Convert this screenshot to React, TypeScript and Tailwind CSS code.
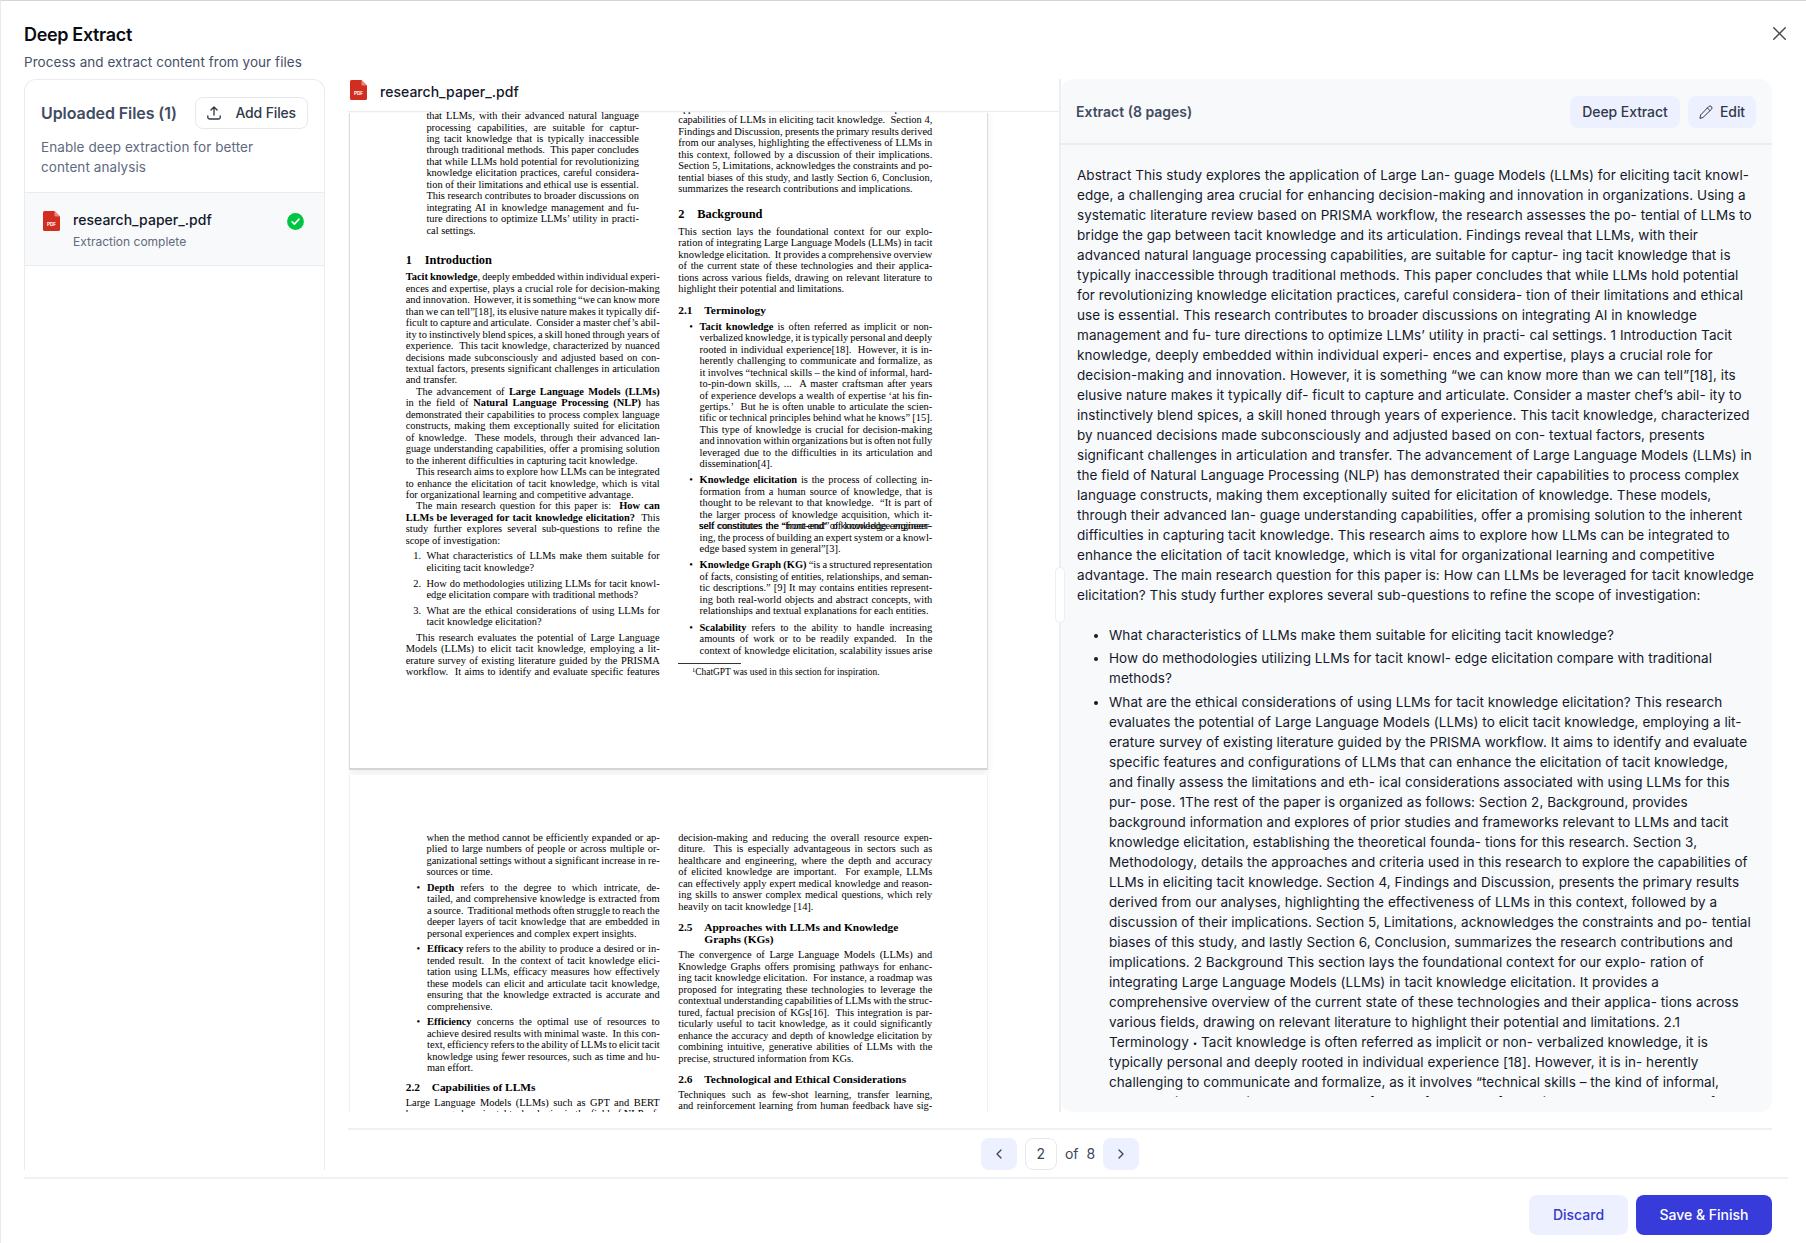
import React from "react";
import { ChevronLeft, ChevronRight, X } from "lucide-react";

function PdfIcon({ className }: { className?: string }) {
  return (
    <svg viewBox="0 0 17 20" className={className} width="17" height="20">
      <path d="M1.5 0H11.5L17 5.5V18.5A1.5 1.5 0 0 1 15.5 20H1.5A1.5 1.5 0 0 1 0 18.5V1.5A1.5 1.5 0 0 1 1.5 0Z" fill="#d22d21" />
      <path d="M11.5 0L17 5.5H12.5A1 1 0 0 1 11.5 4.5Z" fill="#e98a80" />
      <text x="8.5" y="15.2" fontSize="4.8" fontWeight="700" fontFamily="Inter, sans-serif" fill="#fff" textAnchor="middle">
        PDF
      </text>
    </svg>
  );
}

/* One typeset line. A trailing "|" marks the last line of a paragraph. */
function rich(s: string) {
  return s.split("**").map((part, i) => (i % 2 ? <b key={i}>{part}</b> : part));
}

function Lines({ text, className = "" }: { text: string[]; className?: string }) {
  return (
    <div className={className}>
      {text.map((raw, i) => {
        const end = raw.endsWith("|");
        const indent = raw.startsWith(">");
        const s = raw.replace(/^>|\|$/g, "").replace(/ {2}/g, "\u00a0 ");
        return (
          <div
            key={i}
            className={
              "h-[11.46px] whitespace-nowrap " +
              (indent ? "pl-[10.4px] " : "") +
              (end ? "" : "[text-align-last:justify] [word-spacing:-1.2px]")
            }
          >
            {rich(s)}
          </div>
        );
      })}
    </div>
  );
}

function Item({ mark, text, className = "" }: { mark: string; text: string[]; className?: string }) {
  return (
    <div className={"flex " + className}>
      <div className={"shrink-0 text-right " + (mark === "•" ? "w-[14.5px] mr-[6.8px]" : "w-[15.4px] mr-[5.4px]")}>{mark}</div>
      <Lines text={text} className="flex-1 min-w-0" />
    </div>
  );
}

function Heading({ no, children, big, className = "" }: { no: string; children: React.ReactNode; big?: boolean; className?: string }) {
  return (
    <div className={"flex font-bold whitespace-nowrap " + (big ? "text-[12.4px] " : "text-[11.4px] ") + className}>
      <div className={big ? "w-[19px] shrink-0" : "w-[26px] shrink-0"}>{no}</div>
      <div>{children}</div>
    </div>
  );
}

const extractIntro = [
  "Abstract This study explores the application of Large Lan- guage Models (LLMs) for eliciting tacit knowl-",
  "edge, a challenging area crucial for enhancing decision-making and innovation in organizations. Using a",
  "systematic literature review based on PRISMA workflow, the research assesses the po- tential of LLMs to",
  "bridge the gap between tacit knowledge and its articulation. Findings reveal that LLMs, with their",
  "advanced natural language processing capabilities, are suitable for captur- ing tacit knowledge that is",
  "typically inaccessible through traditional methods. This paper concludes that while LLMs hold potential",
  "for revolutionizing knowledge elicitation practices, careful considera- tion of their limitations and ethical",
  "use is essential. This research contributes to broader discussions on integrating AI in knowledge",
  "management and fu- ture directions to optimize LLMs’ utility in practi- cal settings. 1 Introduction Tacit",
  "knowledge, deeply embedded within individual experi- ences and expertise, plays a crucial role for",
  "decision-making and innovation. However, it is something “we can know more than we can tell”[18], its",
  "elusive nature makes it typically dif- ficult to capture and articulate. Consider a master chef’s abil- ity to",
  "instinctively blend spices, a skill honed through years of experience. This tacit knowledge, characterized",
  "by nuanced decisions made subconsciously and adjusted based on con- textual factors, presents",
  "significant challenges in articulation and transfer. The advancement of Large Language Models (LLMs) in",
  "the field of Natural Language Processing (NLP) has demonstrated their capabilities to process complex",
  "language constructs, making them exceptionally suited for elicitation of knowledge. These models,",
  "through their advanced lan- guage understanding capabilities, offer a promising solution to the inherent",
  "difficulties in capturing tacit knowledge. This research aims to explore how LLMs can be integrated to",
  "enhance the elicitation of tacit knowledge, which is vital for organizational learning and competitive",
  "advantage. The main research question for this paper is: How can LLMs be leveraged for tacit knowledge",
  "elicitation? This study further explores several sub-questions to refine the scope of investigation:",
];

const extractItems = [
  ["What characteristics of LLMs make them suitable for eliciting tacit knowledge?"],
  ["How do methodologies utilizing LLMs for tacit knowl- edge elicitation compare with traditional", "methods?"],
  [
    "What are the ethical considerations of using LLMs for tacit knowledge elicitation? This research",
    "evaluates the potential of Large Language Models (LLMs) to elicit tacit knowledge, employing a lit-",
    "erature survey of existing literature guided by the PRISMA workflow. It aims to identify and evaluate",
    "specific features and configurations of LLMs that can enhance the elicitation of tacit knowledge,",
    "and finally assess the limitations and eth- ical considerations associated with using LLMs for this",
    "pur- pose. 1The rest of the paper is organized as follows: Section 2, Background, provides",
    "background information and explores of prior studies and frameworks relevant to LLMs and tacit",
    "knowledge elicitation, establishing the theoretical founda- tions for this research. Section 3,",
    "Methodology, details the approaches and criteria used in this research to explore the capabilities of",
    "LLMs in eliciting tacit knowledge. Section 4, Findings and Discussion, presents the primary results",
    "derived from our analyses, highlighting the effectiveness of LLMs in this context, followed by a",
    "discussion of their implications. Section 5, Limitations, acknowledges the constraints and po- tential",
    "biases of this study, and lastly Section 6, Conclusion, summarizes the research contributions and",
    "implications. 2 Background This section lays the foundational context for our explo- ration of",
    "integrating Large Language Models (LLMs) in tacit knowledge elicitation. It provides a",
    "comprehensive overview of the current state of these technologies and their applica- tions across",
    "various fields, drawing on relevant literature to highlight their potential and limitations. 2.1",
    "Terminology • Tacit knowledge is often referred as implicit or non- verbalized knowledge, it is",
    "typically personal and deeply rooted in individual experience [18]. However, it is in- herently",
    "challenging to communicate and formalize, as it involves “technical skills – the kind of informal,",
    "hard- to-pin-down skills, ... A master craftsman after years of experience develops a wealth of",
  ],
];

/* Inline bullets are set smaller than the surrounding text. */
function smallBullets(s: string) {
  return s.split("•").map((part, i) => (
    <React.Fragment key={i}>
      {i > 0 && <span className="align-[1px] text-[8px] tracking-normal">•</span>}
      {part}
    </React.Fragment>
  ));
}

function PageTwo() {
  return (
    <div className="flex h-[657px] w-[639px] shrink-0 border border-t-0 border-[#dcdcdc] border-b-2 border-b-[#d4d4d4] bg-white pl-[55.7px] shadow-[0_2px_8px_rgba(0,0,0,0.08)]">
      <div className="w-[254px] shrink-0">
        <Lines
          className="ml-[20.7px] w-[212.5px] -mt-[2.9px]"
          text={[
            "that LLMs, with their advanced natural language",
            "processing capabilities, are suitable for captur-",
            "ing tacit knowledge that is typically inaccessible",
            "through traditional methods.  This paper concludes",
            "that while LLMs hold potential for revolutionizing",
            "knowledge elicitation practices, careful considera-",
            "tion of their limitations and ethical use is essential.",
            "This research contributes to broader discussions on",
            "integrating AI in knowledge management and fu-",
            "ture directions to optimize LLMs’ utility in practi-",
            "cal settings.|",
          ]}
        />
        <Heading no="1" big className="mt-[18.5px] mb-[5.3px]">Introduction</Heading>
        <Lines
          text={[
            "**Tacit knowledge**, deeply embedded within individual experi-",
            "ences and expertise, plays a crucial role for decision-making",
            "and innovation.  However, it is something “we can know more",
            "than we can tell”[18], its elusive nature makes it typically dif-",
            "ficult to capture and articulate.  Consider a master chef’s abil-",
            "ity to instinctively blend spices, a skill honed through years of",
            "experience.  This tacit knowledge, characterized by nuanced",
            "decisions made subconsciously and adjusted based on con-",
            "textual factors, presents significant challenges in articulation",
            "and transfer.|",
            ">The advancement of **Large Language Models (LLMs)**",
            "in the field of **Natural Language Processing (NLP)** has",
            "demonstrated their capabilities to process complex language",
            "constructs, making them exceptionally suited for elicitation",
            "of knowledge.  These models, through their advanced lan-",
            "guage understanding capabilities, offer a promising solution",
            "to the inherent difficulties in capturing tacit knowledge.|",
            ">This research aims to explore how LLMs can be integrated",
            "to enhance the elicitation of tacit knowledge, which is vital",
            "for organizational learning and competitive advantage.|",
            ">The main research question for this paper is:  **How can**",
            "**LLMs be leveraged for tacit knowledge elicitation?**  This",
            "study further explores several sub-questions to refine the",
            "scope of investigation:|",
          ]}
        />
        <Item mark="1." className="mt-[4.2px]" text={["What characteristics of LLMs make them suitable for", "eliciting tacit knowledge?|"]} />
        <Item mark="2." className="mt-[4.2px]" text={["How do methodologies utilizing LLMs for tacit knowl-", "edge elicitation compare with traditional methods?|"]} />
        <Item mark="3." className="mt-[4.2px] mb-[4.2px]" text={["What are the ethical considerations of using LLMs for", "tacit knowledge elicitation?|"]} />
        <Lines
          text={[
            ">This research evaluates the potential of Large Language",
            "Models (LLMs) to elicit tacit knowledge, employing a lit-",
            "erature survey of existing literature guided by the PRISMA",
            "workflow.  It aims to identify and evaluate specific features",
          ]}
        />
      </div>
      <div className="ml-[18.6px] w-[254px] shrink-0">
        <Lines
          className="-mt-[10.2px]"
          text={[
            "approaches and criteria used in this research to explore the",
            "capabilities of LLMs in eliciting tacit knowledge.  Section 4,",
            "Findings and Discussion, presents the primary results derived",
            "from our analyses, highlighting the effectiveness of LLMs in",
            "this context, followed by a discussion of their implications.",
            "Section 5, Limitations, acknowledges the constraints and po-",
            "tential biases of this study, and lastly Section 6, Conclusion,",
            "summarizes the research contributions and implications.|",
          ]}
        />
        <Heading no="2" big className="mt-[14.5px] mb-[5.5px]">Background</Heading>
        <Lines
          text={[
            "This section lays the foundational context for our explo-",
            "ration of integrating Large Language Models (LLMs) in tacit",
            "knowledge elicitation.  It provides a comprehensive overview",
            "of the current state of these technologies and their applica-",
            "tions across various fields, drawing on relevant literature to",
            "highlight their potential and limitations.|",
          ]}
        />
        <Heading no="2.1" className="mt-[10px] mb-[4.8px]">Terminology</Heading>
        <Item
          mark="•"
          text={[
            "**Tacit knowledge** is often referred as implicit or non-",
            "verbalized knowledge, it is typically personal and deeply",
            "rooted in individual experience[18].  However, it is in-",
            "herently challenging to communicate and formalize, as",
            "it involves “technical skills – the kind of informal, hard-",
            "to-pin-down skills, ...  A master craftsman after years",
            "of experience develops a wealth of expertise ‘at his fin-",
            "gertips.’  But he is often unable to articulate the scien-",
            "tific or technical principles behind what he knows” [15].",
            "This type of knowledge is crucial for decision-making",
            "and innovation within organizations but is often not fully",
            "leveraged due to the difficulties in its articulation and",
            "dissemination[4].|",
          ]}
        />
        <div className="relative">
          <Item
            mark="•"
            className="mt-[4.5px]"
            text={[
              "**Knowledge elicitation** is the process of collecting in-",
              "formation from a human source of knowledge, that is",
              "thought to be relevant to that knowledge.  “It is part of",
              "the larger process of knowledge acquisition, which it-",
              "self constitutes the “front-end” of knowledge engineer-",
              "ing, the process of building an expert system or a knowl-",
              "edge based system in general”[3].|",
            ]}
          />
          <div className="absolute top-[45.8px] right-[2px] left-[20.5px] font-['Liberation_Sans'] text-[9.6px] whitespace-nowrap text-black [text-align-last:justify] [word-spacing:-1.5px]">
            self constitutes the “front-end” of knowledge engineer-
          </div>
        </div>
        <Item
          mark="•"
          className="mt-[5px]"
          text={[
            "**Knowledge Graph (KG)** “is a structured representation",
            "of facts, consisting of entities, relationships, and seman-",
            "tic descriptions.” [9] It may contains entities represent-",
            "ing both real-world objects and abstract concepts, with",
            "relationships and textual explanations for each entities.|",
          ]}
        />
        <Item
          mark="•"
          className="mt-[5.2px]"
          text={[
            "**Scalability** refers to the ability to handle increasing",
            "amounts of work or to be readily expanded.  In the",
            "context of knowledge elicitation, scalability issues arise",
          ]}
        />
        <div className="mt-[6.4px] h-px w-[63px] bg-[#333]" />
        <div className="mt-[3px] flex pl-[13.8px] text-[9.4px]">
          <span className="-mt-[3px] text-[6.5px]">1</span>
          <span>ChatGPT was used in this section for inspiration.</span>
        </div>
      </div>
    </div>
  );
}

function PageThree() {
  return (
    <div className="flex h-[500px] w-[639px] shrink-0 border border-t-0 border-[#f0f0f0] bg-white pt-[56.9px] pl-[55.7px] shadow-[0_0_8px_rgba(0,0,0,0.03)]">
      <div className="w-[254px] shrink-0">
        <Lines
          className="ml-[20.8px]"
          text={[
            "when the method cannot be efficiently expanded or ap-",
            "plied to large numbers of people or across multiple or-",
            "ganizational settings without a significant increase in re-",
            "sources or time.|",
          ]}
        />
        <Item
          mark="•"
          className="mt-[4.2px]"
          text={[
            "**Depth** refers to the degree to which intricate, de-",
            "tailed, and comprehensive knowledge is extracted from",
            "a source.  Traditional methods often struggle to reach the",
            "deeper layers of tacit knowledge that are embedded in",
            "personal experiences and complex expert insights.|",
          ]}
        />
        <Item
          mark="•"
          className="mt-[4.1px]"
          text={[
            "**Efficacy** refers to the ability to produce a desired or in-",
            "tended result.  In the context of tacit knowledge elici-",
            "tation using LLMs, efficacy measures how effectively",
            "these models can elicit and articulate tacit knowledge,",
            "ensuring that the knowledge extracted is accurate and",
            "comprehensive.|",
          ]}
        />
        <Item
          mark="•"
          className="mt-[4.3px]"
          text={[
            "**Efficiency** concerns the optimal use of resources to",
            "achieve desired results with minimal waste.  In this con-",
            "text, efficiency refers to the ability of LLMs to elicit tacit",
            "knowledge using fewer resources, such as time and hu-",
            "man effort.|",
          ]}
        />
        <Heading no="2.2" className="mt-[8.2px] mb-[3.7px]">Capabilities of LLMs</Heading>
        <Lines
          text={[
            "Large Language Models (LLMs) such as GPT and BERT",
            "have emerged as pivotal technologies in the field of NLP, of-",
          ]}
        />
      </div>
      <div className="ml-[18.6px] w-[254px] shrink-0">
        <Lines
          text={[
            "decision-making and reducing the overall resource expen-",
            "diture.  This is especially advantageous in sectors such as",
            "healthcare and engineering, where the depth and accuracy",
            "of elicited knowledge are important.  For example, LLMs",
            "can effectively apply expert medical knowledge and reason-",
            "ing skills to answer complex medical questions, which rely",
            "heavily on tacit knowledge [14].|",
          ]}
        />
        <Heading no="2.5" className="mt-[10.2px] mb-[4.3px]">
          <div>Approaches with LLMs and Knowledge</div>
          <div>Graphs (KGs)</div>
        </Heading>
        <Lines
          text={[
            "The convergence of Large Language Models (LLMs) and",
            "Knowledge Graphs offers promising pathways for enhanc-",
            "ing tacit knowledge elicitation.  For instance, a roadmap was",
            "proposed for integrating these technologies to leverage the",
            "contextual understanding capabilities of LLMs with the struc-",
            "tured, factual precision of KGs[16].  This integration is par-",
            "ticularly useful to tacit knowledge, as it could significantly",
            "enhance the accuracy and depth of knowledge elicitation by",
            "combining intuitive, generative abilities of LLMs with the",
            "precise, structured information from KGs.|",
          ]}
        />
        <Heading no="2.6" className="mt-[9.8px] mb-[3.3px]">Technological and Ethical Considerations</Heading>
        <Lines
          text={[
            "Techniques such as few-shot learning, transfer learning,",
            "and reinforcement learning from human feedback have sig-",
          ]}
        />
      </div>
    </div>
  );
}

export default function App() {
  return (
    <div className="flex h-[1243px] w-[1806px] flex-col overflow-hidden border-t border-l border-t-[#d3d4dc] border-l-[#e9eaf1] bg-white pl-[23px] font-['Inter',sans-serif] text-sm tracking-[-0.155px] text-[#14192b]">
      <header className="flex h-[78px] shrink-0 items-start justify-between pr-[18px]">
        <div>
          <h1 className="mt-[20px] text-[18px] leading-7 font-semibold tracking-[-0.34px] text-[#0c0d12]">Deep Extract</h1>
          <p className="mt-[3px] text-[13.5px] leading-5 tracking-[0.055px] text-[#475067]">Process and extract content from your files</p>
        </div>
        <X className="mt-[21px] -mr-[3px] size-[23px] text-[#4a4a4a]" strokeWidth={1.5} />
      </header>

      <div className="flex h-[1098px] shrink-0">
        <aside className="h-[1091px] w-[301px] shrink-0 rounded-t-xl border border-b-0 border-[#e9ebf0]">
          <div className="h-[112px] px-4 pt-[17px]">
            <div className="flex items-center justify-between">
              <h2 className="text-[16px] font-semibold tracking-[-0.08px] text-[#414b61]">Uploaded Files (1)</h2>
              <button className="flex h-8 w-[113px] items-center justify-between rounded-lg border border-[#e7e8ef] pr-[11px] pl-[10px] font-medium text-[#31394a]">
                <svg viewBox="0 0 16 16" className="size-4" fill="none" stroke="currentColor" strokeWidth="1.35" strokeLinecap="round" strokeLinejoin="round">
                  <path d="M8 10V2.2M4.9 5.1L8 2L11.1 5.1" />
                  <path d="M1.8 10.8V12.2A1.8 1.8 0 0 0 3.6 14H12.4A1.8 1.8 0 0 0 14.2 12.2V10.8" />
                </svg>
                Add Files
              </button>
            </div>
            <p className="mt-[8px] text-[13.5px] leading-5 tracking-[0.08px] text-[#606a80]">
              Enable deep extraction for better
              <br />
              content analysis
            </p>
          </div>
          <div className="flex h-[74px] items-start border-y-[1.5px] border-[#e9ebee] bg-[#f8f9fb] pr-[20px] pl-[17.5px]">
            <PdfIcon className="mt-[18px] shrink-0" />
            <div className="ml-[13.5px] flex-1 pt-[17px]">
              <div className="leading-5 font-medium tracking-[0.03px]">research_paper_.pdf</div>
              <div className="mt-[2px] text-xs leading-5 tracking-normal text-[#606a80]">Extraction complete</div>
            </div>
            <svg viewBox="0 0 17 17" className="mt-[20px] size-[17px] shrink-0">
              <circle cx="8.5" cy="8.5" r="8.4" fill="#00c543" />
              <path d="M5.1 8.8L7.4 11.1L12 6.1" fill="none" stroke="#fff" strokeWidth="1.6" strokeLinecap="round" strokeLinejoin="round" />
            </svg>
          </div>
        </aside>

        <main className="ml-[23px] flex w-[1424px] flex-col">
          <div className="flex h-[1033px] shrink-0">
            <section className="flex w-[711px] shrink-0 flex-col">
              <div className="flex h-[33px] shrink-0 items-start border-b-[1.5px] border-[#eaebf0] pl-[2px]">
                <PdfIcon className="mt-px" />
                <span className="mt-[3px] ml-[13px] leading-5 font-medium tracking-[0.03px]">research_paper_.pdf</span>
              </div>
              <div className="flex h-[1000px] flex-col gap-[5px] overflow-hidden pt-px pl-px font-['Liberation_Serif',serif] text-[10.43px] leading-[11.46px] tracking-normal text-black">
                <PageTwo />
                <PageThree />
              </div>
            </section>

            <section className="relative flex w-[713px] flex-col border-l-[2px] border-[#edeef2]">
              <div className="flex h-full flex-col rounded-xl bg-[#f8f9fb]">
                <div className="flex h-[66px] shrink-0 items-center justify-between border-b-2 border-[#eaecef] px-[15px] pt-px pr-[16px] text-[#31394a]">
                  <span className="font-semibold tracking-normal text-[#414b61]">Extract (8 pages)</span>
                  <div className="flex gap-2 font-medium tracking-[-0.08px]">
                    <button className="h-8 w-[110px] rounded-lg bg-[#edf1ff]">Deep Extract</button>
                    <button className="flex h-8 w-[68px] items-center justify-center gap-[7px] rounded-lg bg-[#edf1ff]">
                      <svg viewBox="0 0 14 14" className="size-[14px]" fill="none" stroke="currentColor" strokeWidth="1" strokeLinejoin="round" strokeLinecap="round">
                        <path d="M1 13L1.7 9.9L9.7 1.6A1.9 1.9 0 0 1 12.4 4.3L4.2 12.3Z" />
                        <path d="M8.4 3L11 5.6" />
                      </svg>
                      Edit
                    </button>
                  </div>
                </div>
                <div className="h-[952px] overflow-hidden pt-[20px] pl-[16px] text-[13.5px] leading-5 tracking-[0.055px] whitespace-nowrap">
                  <div>
                    {extractIntro.map((l) => (
                      <div key={l}>{l}</div>
                    ))}
                  </div>
                  <ul className="mt-5 flex list-disc flex-col gap-[3.4px] pl-8">
                    {extractItems.map((lines) => (
                      <li key={lines[0]}>
                        {lines.map((l) => (
                          <div key={l} className="h-5">{smallBullets(l)}</div>
                        ))}
                      </li>
                    ))}
                  </ul>
                </div>
              </div>
              <div className="absolute top-[488px] -left-[6px] h-[56px] w-[10px] rounded-[5px] border-[1.5px] border-[#eceef3] bg-white" />
            </section>
          </div>

          <div className="mt-[16px] flex h-[49px] items-center justify-center border-t-2 border-[#f0f1f5] pt-px tracking-normal text-[#3c4558]">
            <button className="flex h-8 w-9 items-center justify-center rounded-lg bg-[#edf1ff]">
              <ChevronLeft className="size-4" strokeWidth={2} />
            </button>
            <div className="ml-2 flex h-8 w-8 items-center justify-center rounded-lg border border-[#e7e8ef]">2</div>
            <span className="ml-2">of</span>
            <span className="ml-[8px]">8</span>
            <button className="ml-2 flex h-8 w-9 items-center justify-center rounded-lg bg-[#edf1ff]">
              <ChevronRight className="size-4" strokeWidth={2} />
            </button>
          </div>
        </main>
      </div>

      <footer className="mr-[18px] flex h-[66px] shrink-0 justify-end gap-2 border-t-2 border-[#f0f1f5] pt-[16px] pr-[16px] font-medium tracking-normal">
        <button className="h-10 w-[99px] rounded-lg bg-[#edf1ff] text-[#3538cd]">Discard</button>
        <button className="h-10 w-[136px] rounded-lg bg-[#373bd9] text-white">Save &amp; Finish</button>
      </footer>
    </div>
  );
}
